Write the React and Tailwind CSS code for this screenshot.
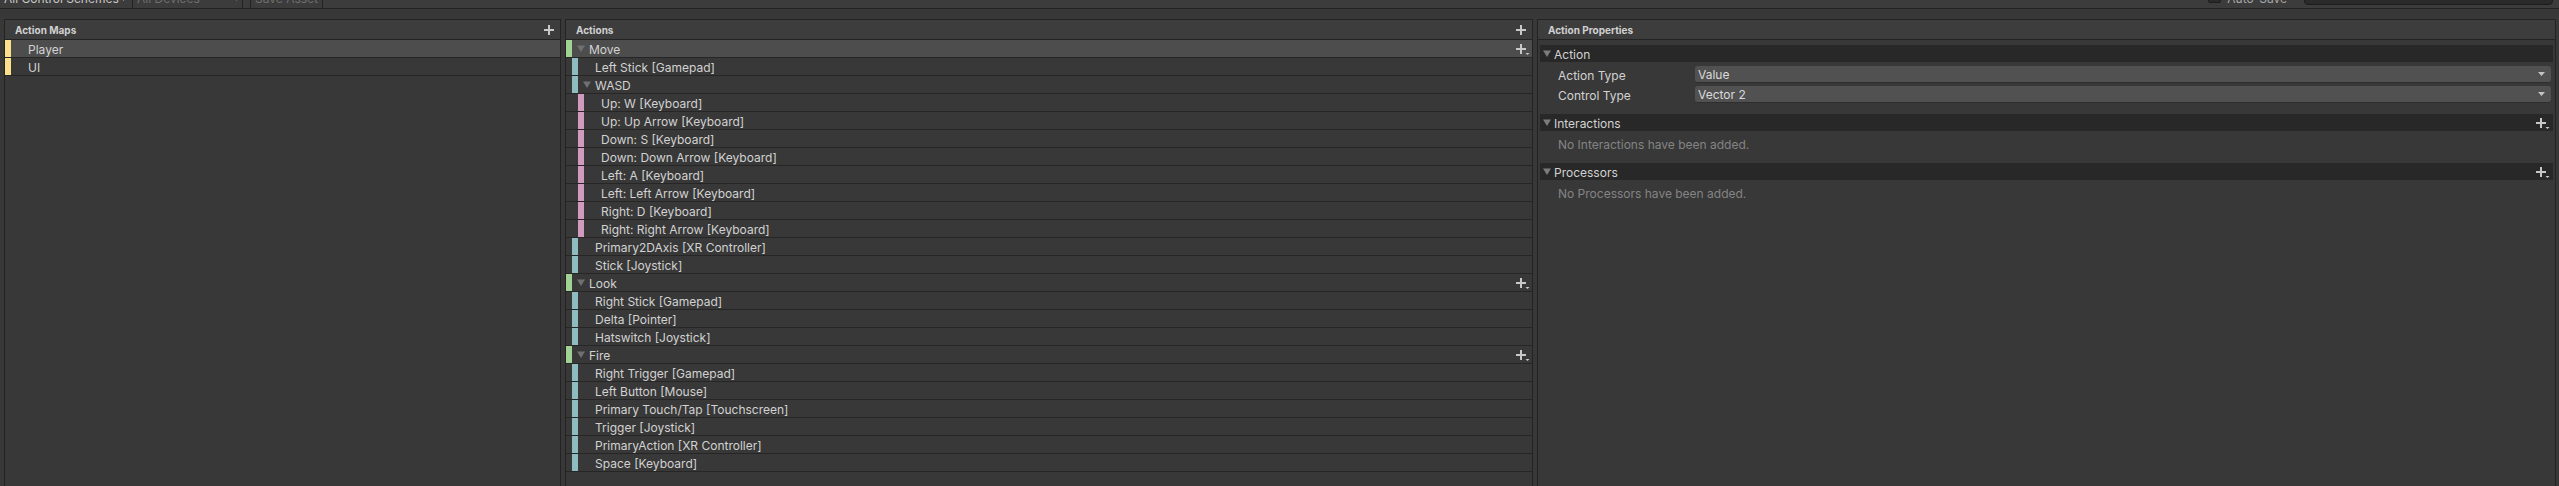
import React from 'react';

const actionRows = [
  { label: 'Move', level: 0, fold: true, selected: true, add: true },
  { label: 'Left Stick [Gamepad]', level: 1 },
  { label: 'WASD', level: 1, fold: true },
  { label: 'Up: W [Keyboard]', level: 2 },
  { label: 'Up: Up Arrow [Keyboard]', level: 2 },
  { label: 'Down: S [Keyboard]', level: 2 },
  { label: 'Down: Down Arrow [Keyboard]', level: 2 },
  { label: 'Left: A [Keyboard]', level: 2 },
  { label: 'Left: Left Arrow [Keyboard]', level: 2 },
  { label: 'Right: D [Keyboard]', level: 2 },
  { label: 'Right: Right Arrow [Keyboard]', level: 2 },
  { label: 'Primary2DAxis [XR Controller]', level: 1 },
  { label: 'Stick [Joystick]', level: 1 },
  { label: 'Look', level: 0, fold: true, add: true },
  { label: 'Right Stick [Gamepad]', level: 1 },
  { label: 'Delta [Pointer]', level: 1 },
  { label: 'Hatswitch [Joystick]', level: 1 },
  { label: 'Fire', level: 0, fold: true, add: true },
  { label: 'Right Trigger [Gamepad]', level: 1 },
  { label: 'Left Button [Mouse]', level: 1 },
  { label: 'Primary Touch/Tap [Touchscreen]', level: 1 },
  { label: 'Trigger [Joystick]', level: 1 },
  { label: 'PrimaryAction [XR Controller]', level: 1 },
  { label: 'Space [Keyboard]', level: 1 },
];

const indent = ['', 'ml-[6px]', 'ml-[12px]'];
const stripe = ['bg-[#a2d293]', 'bg-[#8ebcc0]', 'bg-[#d19bbf]'];

function Plus() {
  return (
    <svg width="10" height="10" viewBox="0 0 10 10" className="shrink-0">
      <rect x="4" y="0" width="2" height="10" fill="#c8c8c8" />
      <rect x="0" y="4" width="10" height="2" fill="#c8c8c8" />
    </svg>
  );
}

function PlusMenu() {
  return (
    <svg width="14" height="11" viewBox="0 0 14 11" className="shrink-0">
      <rect x="4" y="0" width="2" height="10" fill="#c8c8c8" />
      <rect x="0" y="4" width="10" height="2" fill="#c8c8c8" />
      <path d="M9.5 9h4l-2 2z" fill="#c8c8c8" />
    </svg>
  );
}

function Fold({ color = '#707070' }) {
  return (
    <svg width="8" height="7" viewBox="0 0 8 7" className="shrink-0">
      <path d="M0 0.5h8L4 7z" fill={color} />
    </svg>
  );
}

function SmallArrow({ color = '#c4c4c4' }) {
  return (
    <svg width="7" height="4" viewBox="0 0 7 4" className="shrink-0">
      <path d="M0 0h7L3.5 4z" fill={color} />
    </svg>
  );
}

function PanelHeader({ title, add }) {
  return (
    <div className="h-[20px] flex items-center justify-between pl-[10px] pr-[6px] bg-[#3d3d3d] border-b border-[#242424]">
      <span className="text-[10px] font-bold text-[#d0d0d0] pt-[1px]">{title}</span>
      {add && <Plus />}
    </div>
  );
}

function MapRow({ label, selected }) {
  return (
    <div className={`h-[18px] flex items-center border-b border-[#262626] ${selected ? 'bg-[#4d4d4d]' : ''}`}>
      <div className="w-[6px] h-full bg-[#fde08b]" />
      <span className="ml-[17px] pt-[2px]">{label}</span>
    </div>
  );
}

function ActionRow({ row }) {
  return (
    <div className={`h-[18px] flex items-center border-b border-[#262626] pr-[2px] ${row.selected ? 'bg-[#4d4d4d]' : ''}`}>
      <div className={`w-[6px] h-full shrink-0 ${indent[row.level]} ${stripe[row.level]}`} />
      {row.fold ? (
        <>
          <span className="ml-[5px]"><Fold /></span>
          <span className="ml-[4px] pt-[2px]">{row.label}</span>
        </>
      ) : (
        <span className="ml-[17px] pt-[2px]">{row.label}</span>
      )}
      <div className="flex-1" />
      {row.add && <span className="mt-[1px]"><PlusMenu /></span>}
    </div>
  );
}

function FoldoutHeader({ title, add }) {
  return (
    <div className="h-[17px] flex items-center bg-[#282828] pl-[3px] pr-[3px]">
      <Fold color="#7c7c7c" />
      <span className="ml-[3px] pt-[1px]">{title}</span>
      <div className="flex-1" />
      {add && <span className="mt-[1px]"><PlusMenu /></span>}
    </div>
  );
}

function Field({ label, value, className = '' }) {
  return (
    <div className={`h-[17px] flex items-center pl-[18px] pr-[2px] ${className}`}>
      <span className="w-[137px] shrink-0 pt-[1px]">{label}</span>
      <div className="flex-1 h-[17px] flex items-center justify-between pl-[3px] pr-[6px] bg-[#515151] rounded-[3px] border-b border-[#2e2e2e] text-[#dadada]">
        <span>{value}</span>
        <SmallArrow />
      </div>
    </div>
  );
}

export default function App() {
  return (
    <div className="w-[2559px] h-[486px] overflow-hidden bg-[#383838] text-[12px] leading-[15px] text-[#d2d2d2] font-['Inter',sans-serif]">
      <div className="h-[9px] bg-[#3c3c3c] border-b border-[#232323] overflow-hidden">
        <div className="h-[21px] -mt-[12px] flex items-center">
          <div className="h-full flex items-center pl-[4px] pr-[5px] w-[133px] border-r border-[#232323]">
            <span className="text-[#c8c8c8]">All Control Schemes</span>
            <div className="flex-1" />
            <SmallArrow color="#9a9a9a" />
          </div>
          <div className="h-full flex items-center pl-[4px] pr-[2px] w-[110px] border-r border-[#232323]">
            <span className="text-[#6f6f6f]">All Devices</span>
            <div className="flex-1" />
            <SmallArrow color="#6f6f6f" />
          </div>
          <div className="h-full ml-[7px] w-[73px] border-l border-r border-[#232323] flex items-center pl-[4px]">
            <span className="text-[#6f6f6f]">Save Asset</span>
          </div>
          <div className="flex-1" />
          <div className="self-start mt-[2px] w-[13px] h-[13px] rounded-[2px] bg-[#2a2a2a] border border-[#1e1e1e]" />
          <span className="ml-[6px] text-[#a8a8a8]">Auto-Save</span>
          <div className="self-start ml-[17px] mr-[6px] w-[249px] h-[17px] rounded-[4px] bg-[#2a2a2a] border border-[#1c1c1c] flex items-center pl-[8px]">
            <span className="text-[10px] text-[#9a9a9a]">⌕</span>
          </div>
        </div>
      </div>

      <div className="mt-[10px] flex gap-[4px] pl-[4px]">
        <div className="w-[557px] h-[470px] shrink-0 border border-[#232323] bg-[#383838]">
          <PanelHeader title="Action Maps" add />
          <MapRow label="Player" selected />
          <MapRow label="UI" />
        </div>

        <div className="w-[968px] h-[470px] shrink-0 border border-[#232323] bg-[#383838]">
          <PanelHeader title="Actions" add />
          {actionRows.map((row) => (
            <ActionRow key={row.label} row={row} />
          ))}
        </div>

        <div className="w-[1019px] h-[470px] shrink-0 border border-[#232323] bg-[#383838]">
          <PanelHeader title="Action Properties" />
          <div className="px-[2px] pt-[5px]">
            <FoldoutHeader title="Action" />
            <Field label="Action Type" value="Value" className="mt-[4px]" />
            <Field label="Control Type" value="Vector 2" className="mt-[3px]" />
            <div className="mt-[11px]">
              <FoldoutHeader title="Interactions" add />
            </div>
            <div className="mt-[4px] h-[18px] flex items-center pl-[18px] pt-[1px] text-[#848484]">
              No Interactions have been added.
            </div>
            <div className="mt-[10px]">
              <FoldoutHeader title="Processors" add />
            </div>
            <div className="mt-[4px] h-[18px] flex items-center pl-[18px] pt-[1px] text-[#848484]">
              No Processors have been added.
            </div>
          </div>
        </div>
      </div>
    </div>
  );
}
